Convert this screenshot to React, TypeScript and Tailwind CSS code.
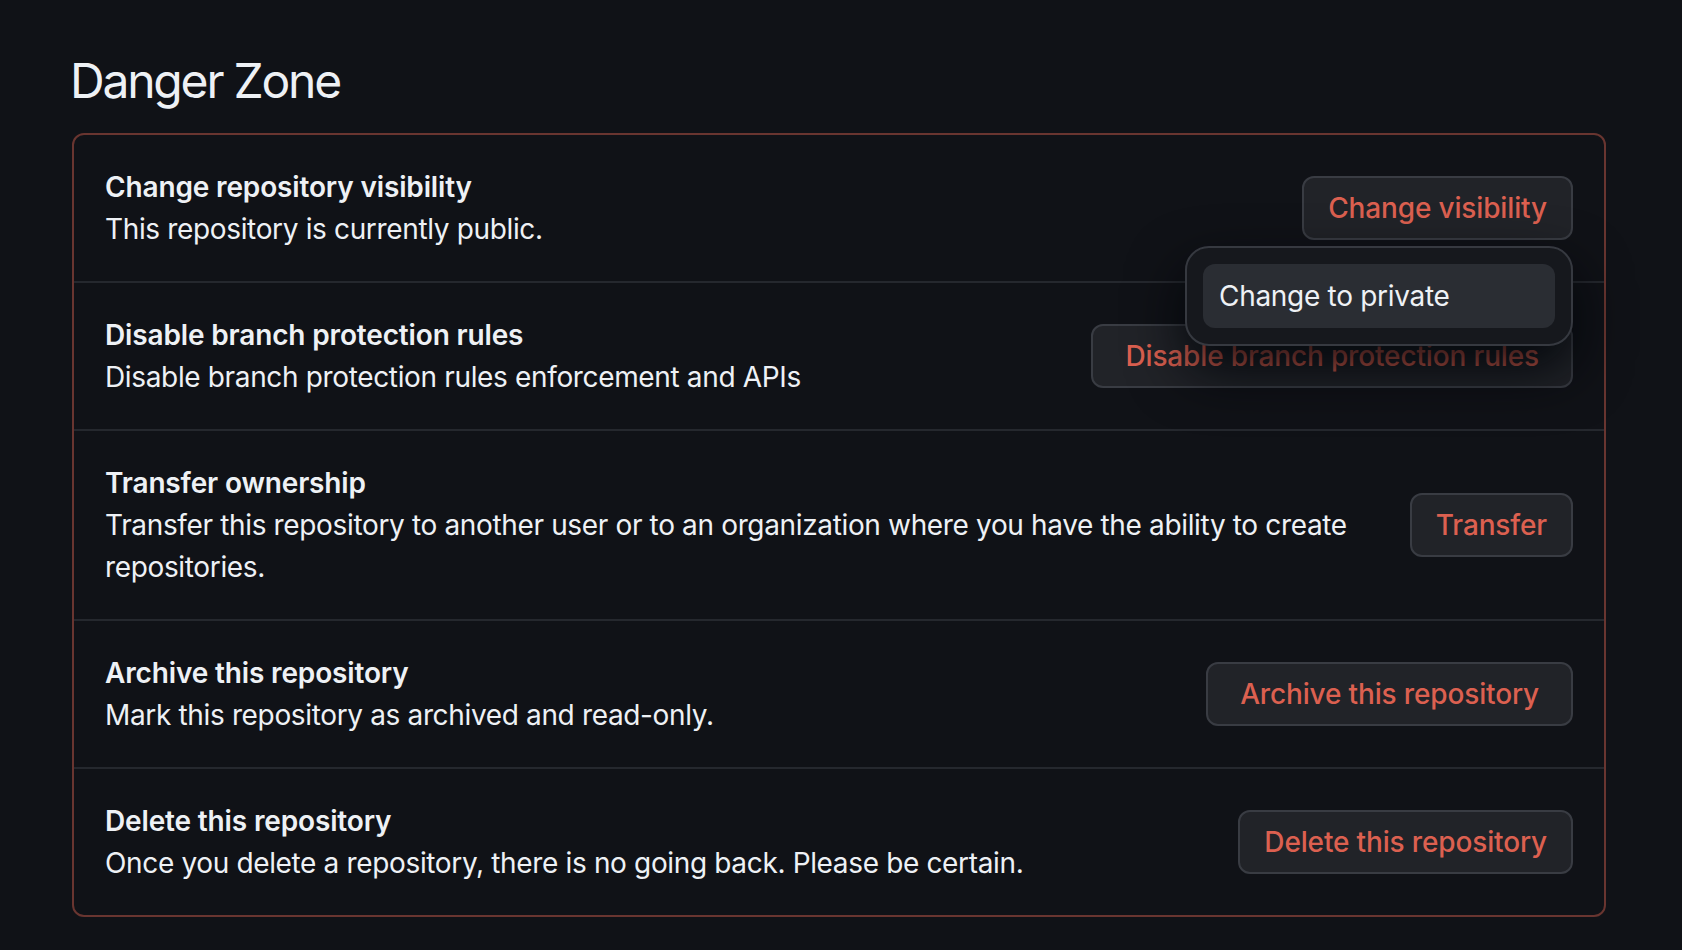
import React from 'react';

type Row = {
  title: string;
  description: string;
  action: string;
  wide?: boolean;
};

const rows: Row[] = [
  {
    title: 'Change repository visibility',
    description: 'This repository is currently public.',
    action: 'Change visibility',
  },
  {
    title: 'Disable branch protection rules',
    description: 'Disable branch protection rules enforcement and APIs',
    action: 'Disable branch protection rules',
    wide: true,
  },
  {
    title: 'Transfer ownership',
    description:
      'Transfer this repository to another user or to an organization where you have the ability to create repositories.',
    action: 'Transfer',
  },
  {
    title: 'Archive this repository',
    description: 'Mark this repository as archived and read-only.',
    action: 'Archive this repository',
    wide: true,
  },
  {
    title: 'Delete this repository',
    description: 'Once you delete a repository, there is no going back. Please be certain.',
    action: 'Delete this repository',
  },
];

function DangerButton({ label, wide }: { label: string; wide?: boolean }) {
  return (
    <button
      className={`h-[64px] ${wide ? 'px-[32px]' : 'px-[24px]'} rounded-[12px] border-2 border-[#393c43] bg-[#212328] text-[28px] font-medium tracking-[-0.15px] text-[#dc6050] whitespace-nowrap`}
    >
      {label}
    </button>
  );
}

function VisibilityMenu() {
  return (
    <div className="absolute right-0 top-[70px] z-10 w-[388px] p-[16px] rounded-[24px] border-2 border-[#363940] bg-[#16181d] shadow-[0_24px_56px_rgba(1,4,9,0.9)]">
      <div className="h-[64px] px-[16px] flex items-center rounded-[12px] bg-[#2a2d33] text-[28px] tracking-[-0.3px] text-[#eef1f5]">
        Change to private
      </div>
    </div>
  );
}

export default function App() {
  return (
    <div className="min-h-screen bg-[#101217] font-['Inter',sans-serif] pl-[72px] pr-[76px] pt-[51px] pb-[33px]">
      <h2 className="text-[48px] leading-[60px] font-normal tracking-[-2.2px] text-[#eef1f5] mb-[22px] -ml-[2px]">
        Danger Zone
      </h2>

      <div className="rounded-[12px] border-2 border-[#693530]">
        {rows.map((row, i) => (
          <div
            key={row.title}
            className={`flex items-center gap-[32px] px-[31px] py-[31px] ${i > 0 ? 'border-t-2 border-[#25282e]' : ''}`}
          >
            <div className="flex-1 text-[28px] leading-[42px] text-[#eef1f5]">
              <div className="font-semibold tracking-[-0.15px]">{row.title}</div>
              <div className="tracking-[-0.35px]">{row.description}</div>
            </div>
            <div className="relative">
              <DangerButton label={row.action} wide={row.wide} />
              {i === 0 && <VisibilityMenu />}
            </div>
          </div>
        ))}
      </div>
    </div>
  );
}
